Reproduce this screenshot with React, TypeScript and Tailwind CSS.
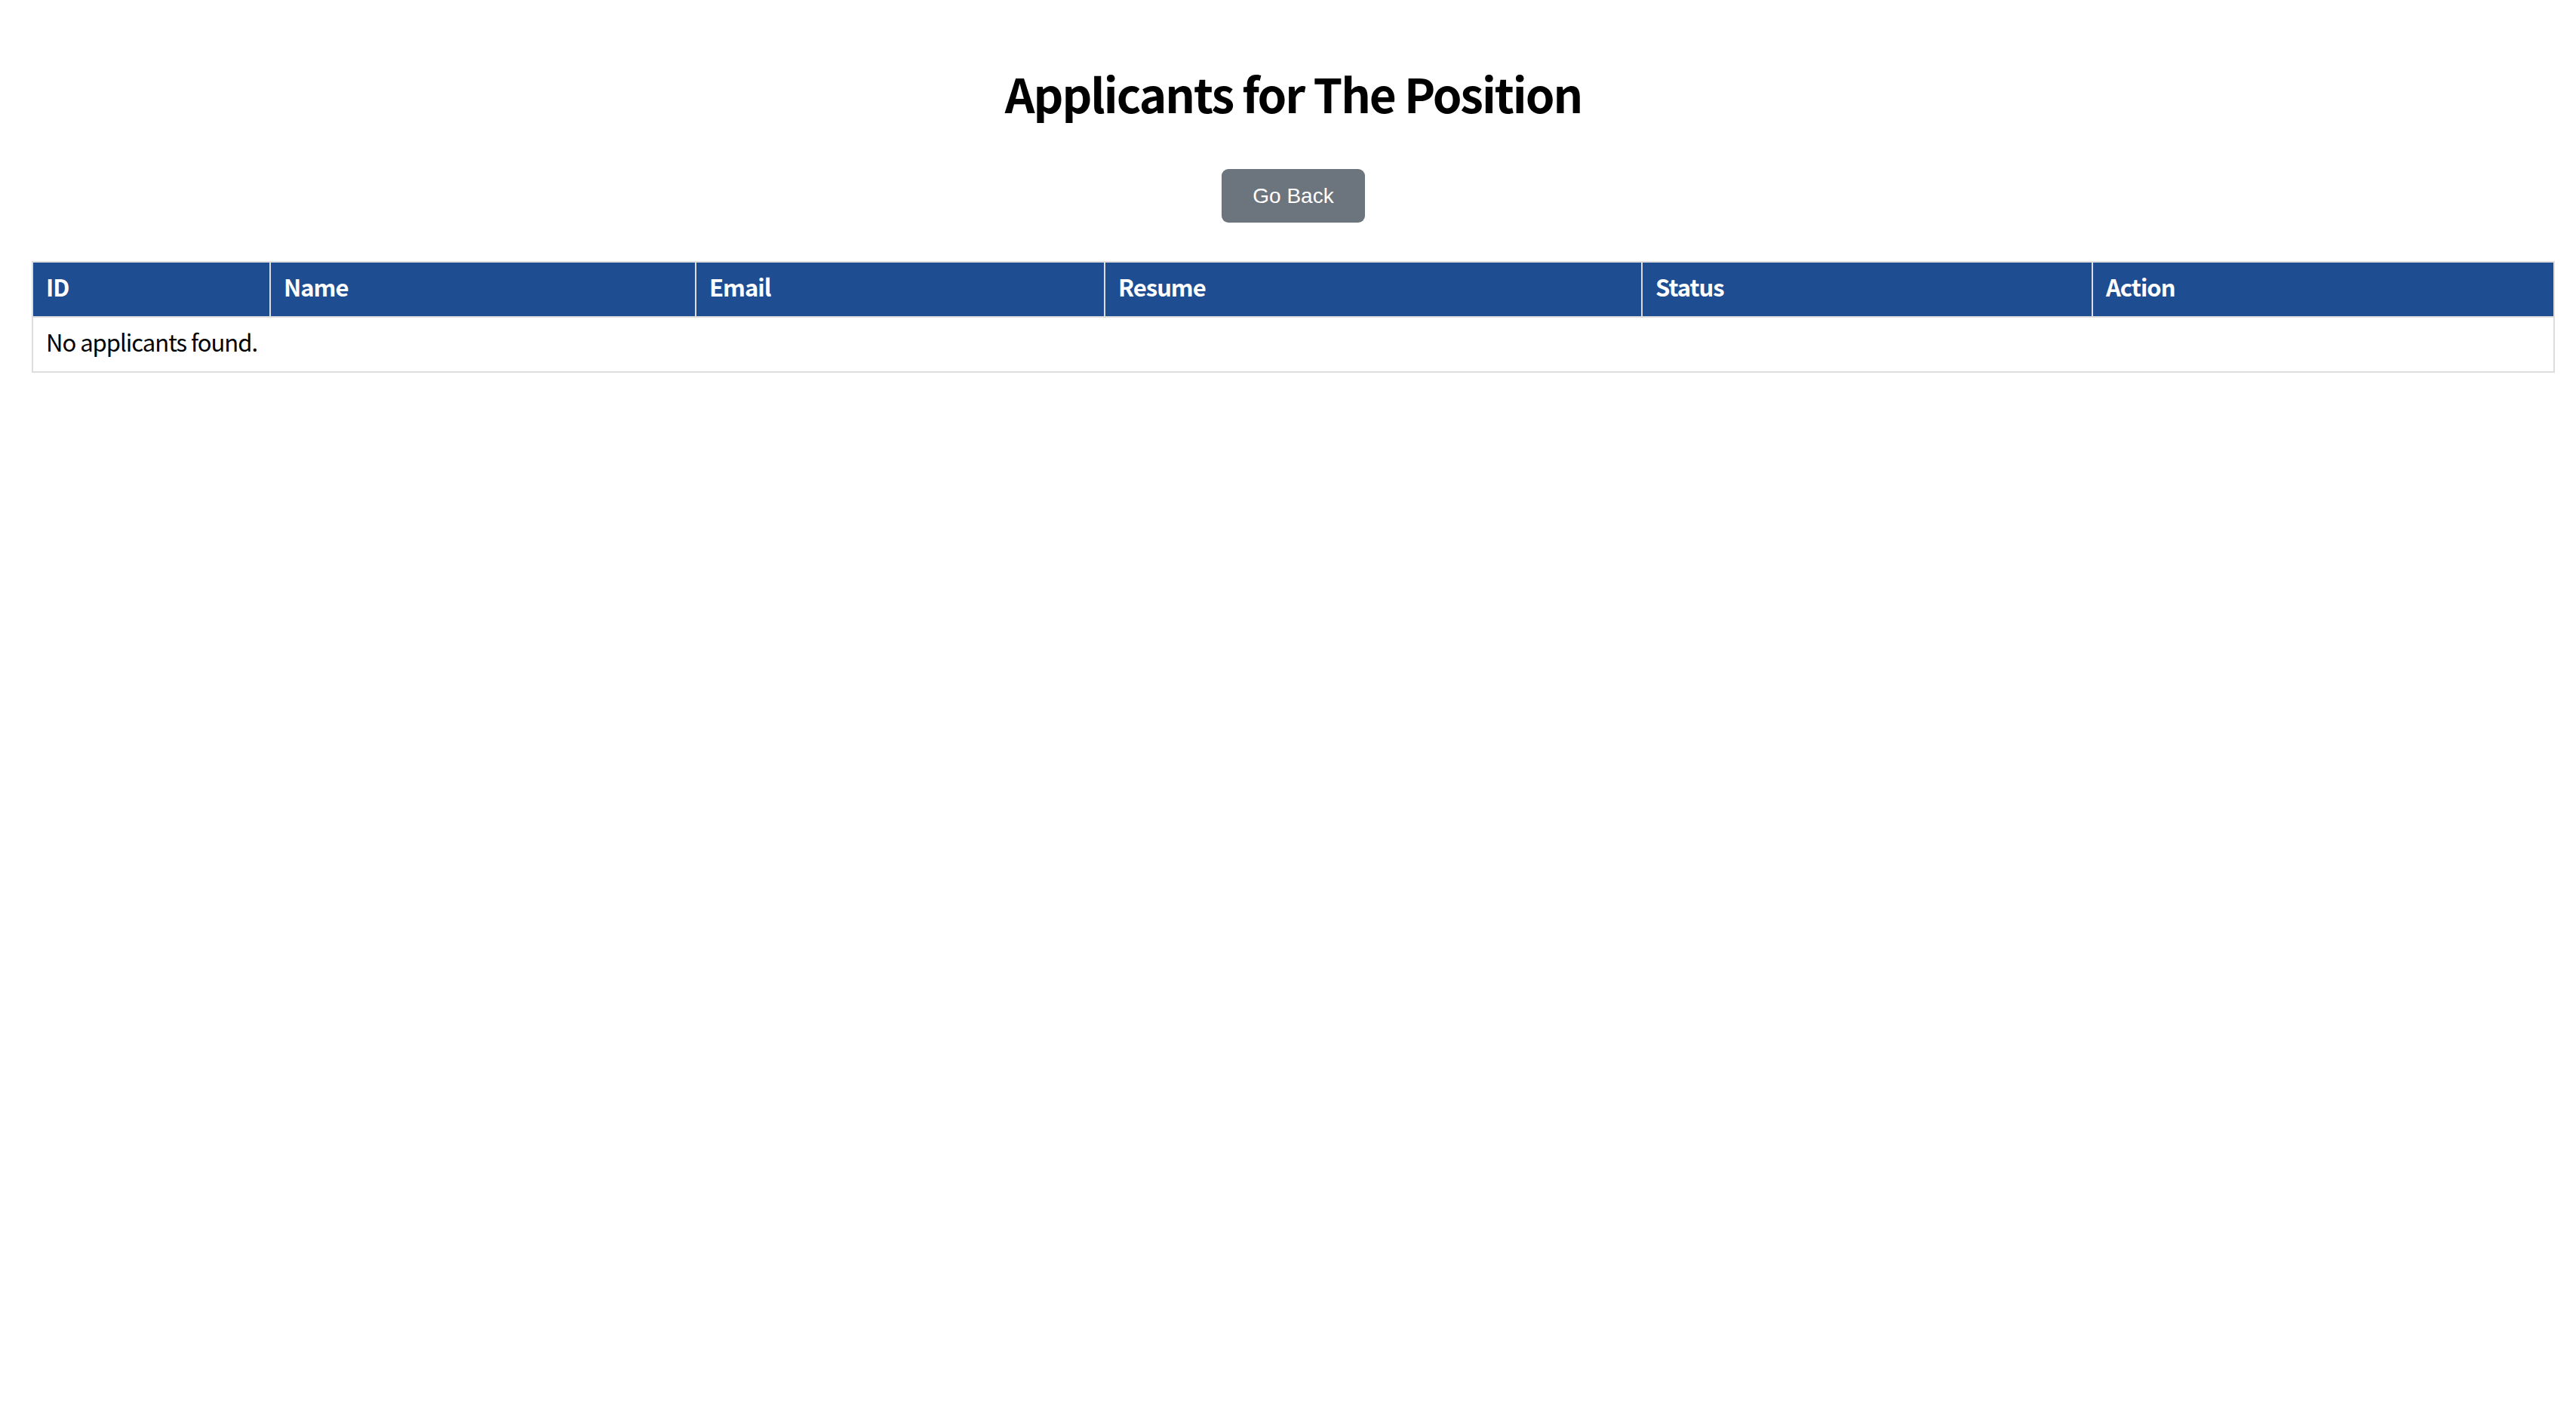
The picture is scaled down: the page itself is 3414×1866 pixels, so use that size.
export default function App() {
  const cols = [
    { label: 'ID', w: 'w-[315px]' },
    { label: 'Name', w: 'w-[564px]' },
    { label: 'Email', w: 'w-[542px]' },
    { label: 'Resume', w: 'w-[712px]' },
    { label: 'Status', w: 'w-[597px]' },
    { label: 'Action', w: 'w-[612px]' },
  ]

  return (
    <div
      className="min-h-screen bg-white pl-[42px] pr-[28px] text-black"
      style={{ fontFamily: '"Noto Sans CJK KR", "Noto Sans", sans-serif' }}
    >
      <h1 className="pt-[86px] text-center text-[62px] font-bold leading-[74px] tracking-[-2px]">
        Applicants for The Position
      </h1>

      <div className="mt-[64px] flex justify-center">
        <button
          className="rounded-[9px] bg-[#6c757d] px-[41px] py-[20px] text-[28px] leading-[31px] text-white"
          style={{ fontFamily: '"Liberation Sans", Arial, sans-serif' }}
        >
          Go Back
        </button>
      </div>

      <table className="mt-[51px] w-[3344px] table-fixed border-collapse border-2 border-[#ddd]">
        <colgroup>
          {cols.map((c) => (
            <col key={c.label} className={c.w} />
          ))}
        </colgroup>
        <thead>
          <tr className="bg-[#1e4d92] text-white">
            {cols.map((c) => (
              <th
                key={c.label}
                className="border-2 border-[#ddd] px-[17px] pt-[12px] pb-[20px] text-left text-[31px] font-bold leading-[39px] tracking-[-1px]"
              >
                {c.label}
              </th>
            ))}
          </tr>
        </thead>
        <tbody>
          <tr>
            <td
              colSpan={6}
              className="border-2 border-[#ddd] px-[17px] pt-[12px] pb-[20px] text-left text-[31px] leading-[39px] tracking-[-1px]"
            >
              No applicants found.
            </td>
          </tr>
        </tbody>
      </table>
    </div>
  )
}
